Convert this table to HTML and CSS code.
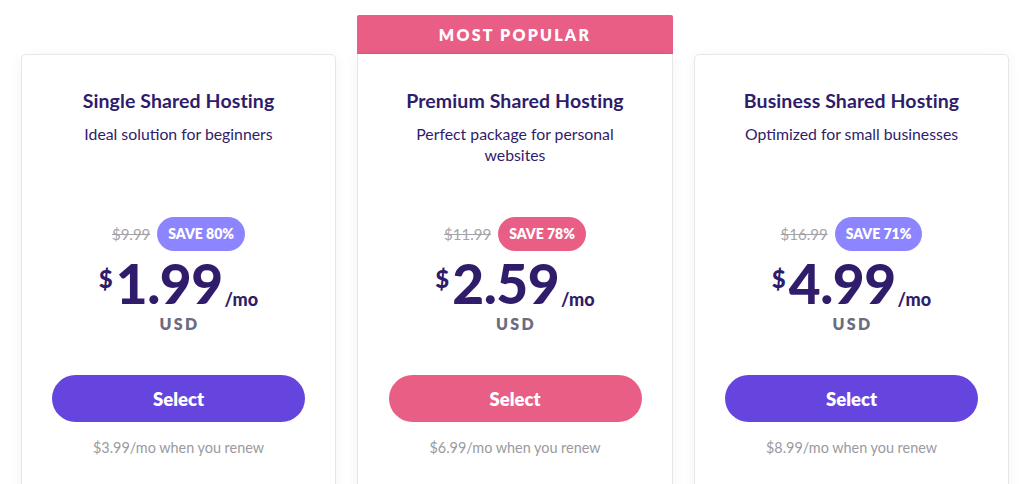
FILE: index.html
```html
<!DOCTYPE html>
<html lang="en">
<head>
<meta charset="utf-8">
<title>Hosting plans</title>
<link rel="stylesheet" href="styles.css">
</head>
<body>
<main class="plans">
  <div class="banner">MOST POPULAR</div>

  <section class="card card-1">
    <div class="head">
      <h2 class="title">Single Shared Hosting</h2>
      <p class="sub">Ideal solution for beginners</p>
    </div>
    <div class="deal">
      <span class="old">$9.99</span>
      <span class="save save-purple">SAVE 80%</span>
    </div>
    <div class="price">
      <span class="cur">$</span><span class="amount">1.99</span><span class="per">/mo</span>
    </div>
    <div class="usd">USD</div>
    <button class="btn btn-purple">Select</button>
    <p class="renew">$3.99/mo when you renew</p>
  </section>

  <section class="card card-2 popular">
    <div class="head">
      <h2 class="title">Premium Shared Hosting</h2>
      <p class="sub">Perfect package for personal websites</p>
    </div>
    <div class="deal">
      <span class="old">$11.99</span>
      <span class="save save-pink">SAVE 78%</span>
    </div>
    <div class="price">
      <span class="cur">$</span><span class="amount">2.59</span><span class="per">/mo</span>
    </div>
    <div class="usd">USD</div>
    <button class="btn btn-pink">Select</button>
    <p class="renew">$6.99/mo when you renew</p>
  </section>

  <section class="card card-3">
    <div class="head">
      <h2 class="title">Business Shared Hosting</h2>
      <p class="sub">Optimized for small businesses</p>
    </div>
    <div class="deal">
      <span class="old">$16.99</span>
      <span class="save save-purple">SAVE 71%</span>
    </div>
    <div class="price">
      <span class="cur">$</span><span class="amount">4.99</span><span class="per">/mo</span>
    </div>
    <div class="usd">USD</div>
    <button class="btn btn-purple">Select</button>
    <p class="renew">$8.99/mo when you renew</p>
  </section>
</main>
</body>
</html>
```

FILE: styles.css
```css
* { box-sizing: border-box; }

html, body {
  margin: 0;
  padding: 0;
  background: #ffffff;
  overflow: hidden;
}

body {
  font-family: Lato, "Noto Sans", "Liberation Sans", sans-serif;
  color: #2f1c6a;
  height: 484px;
}

.plans {
  display: grid;
  grid-template-columns: 315px 316px 315px;
  grid-template-rows: 39px auto;
  column-gap: 21px;
  padding: 15px 0 0 21px;
}

.banner {
  grid-row: 1;
  grid-column: 2;
  background: #e95e85;
  color: #ffffff;
  font-weight: 800;
  font-size: 16px;
  letter-spacing: 2.2px;
  text-align: center;
  line-height: 39px;
  border-radius: 2px 2px 0 0;
  box-shadow: inset 0 -1px 0 rgba(0, 0, 0, 0.06);
}

.card {
  grid-row: 2;
  background: #fff;
  border: 1px solid #e7e7ea;
  border-radius: 5px;
  box-shadow: 0 2px 14px rgba(0, 0, 0, 0.05);
  padding: 34px 20px 60px;
  display: flex;
  flex-direction: column;
  align-items: center;
  text-align: center;
}

.card-1 { grid-column: 1; }
.card-2 { grid-column: 2; border-top: none; border-radius: 0 0 5px 5px; padding-top: 35px; }
.card-3 { grid-column: 3; }

.head {
  height: 128px;
  width: 240px;
}

.title {
  margin: 0;
  font-size: 19.5px;
  line-height: 24px;
  font-weight: 700;
  letter-spacing: 0.1px;
  color: #2f1c6a;
  white-space: nowrap;
}

.sub {
  margin: 10px 0 0;
  font-size: 15.8px;
  line-height: 21px;
  color: #2f1c6a;
}

.deal {
  display: flex;
  align-items: center;
  justify-content: center;
  gap: 7px;
  height: 34px;
}

.old {
  font-size: 15px;
  color: #a3a3a8;
  text-decoration: line-through;
}

.save {
  color: #fff;
  font-weight: 800;
  font-size: 14px;
  line-height: 34px;
  height: 34px;
  padding: 0 11px;
  border-radius: 17px;
}

.save-purple { background: #8c85ff; }
.save-pink { background: #e95e85; }

.price {
  margin-top: 4px;
  display: flex;
  align-items: baseline;
  justify-content: center;
  color: #2f1c6a;
  height: 56px;
}

.cur {
  align-self: flex-start;
  font-size: 24px;
  font-weight: 900;
  line-height: 1;
  margin-top: 12px;
  margin-right: 3px;
}

.amount {
  font-size: 55px;
  font-weight: 900;
  line-height: 56px;
  letter-spacing: -0.5px;
}

.per {
  font-size: 18px;
  font-weight: 900;
  margin-left: 2px;
  position: relative;
  top: 2px;
}

.usd {
  margin-top: 4px;
  font-size: 16px;
  line-height: 18px;
  font-weight: 800;
  letter-spacing: 2.4px;
  color: #6c6c80;
  padding-left: 2px;
}

.btn {
  margin-top: 42px;
  width: 253px;
  height: 47px;
  border: none;
  border-radius: 24px;
  color: #fff;
  font-family: inherit;
  font-size: 18.5px;
  font-weight: 800;
  cursor: pointer;
}

.btn-purple { background: #6545de; }
.btn-pink { background: #e95e85; }

.renew {
  margin: 16px 0 0;
  font-size: 14.4px;
  line-height: 20px;
  color: #9a9aa0;
}
```
